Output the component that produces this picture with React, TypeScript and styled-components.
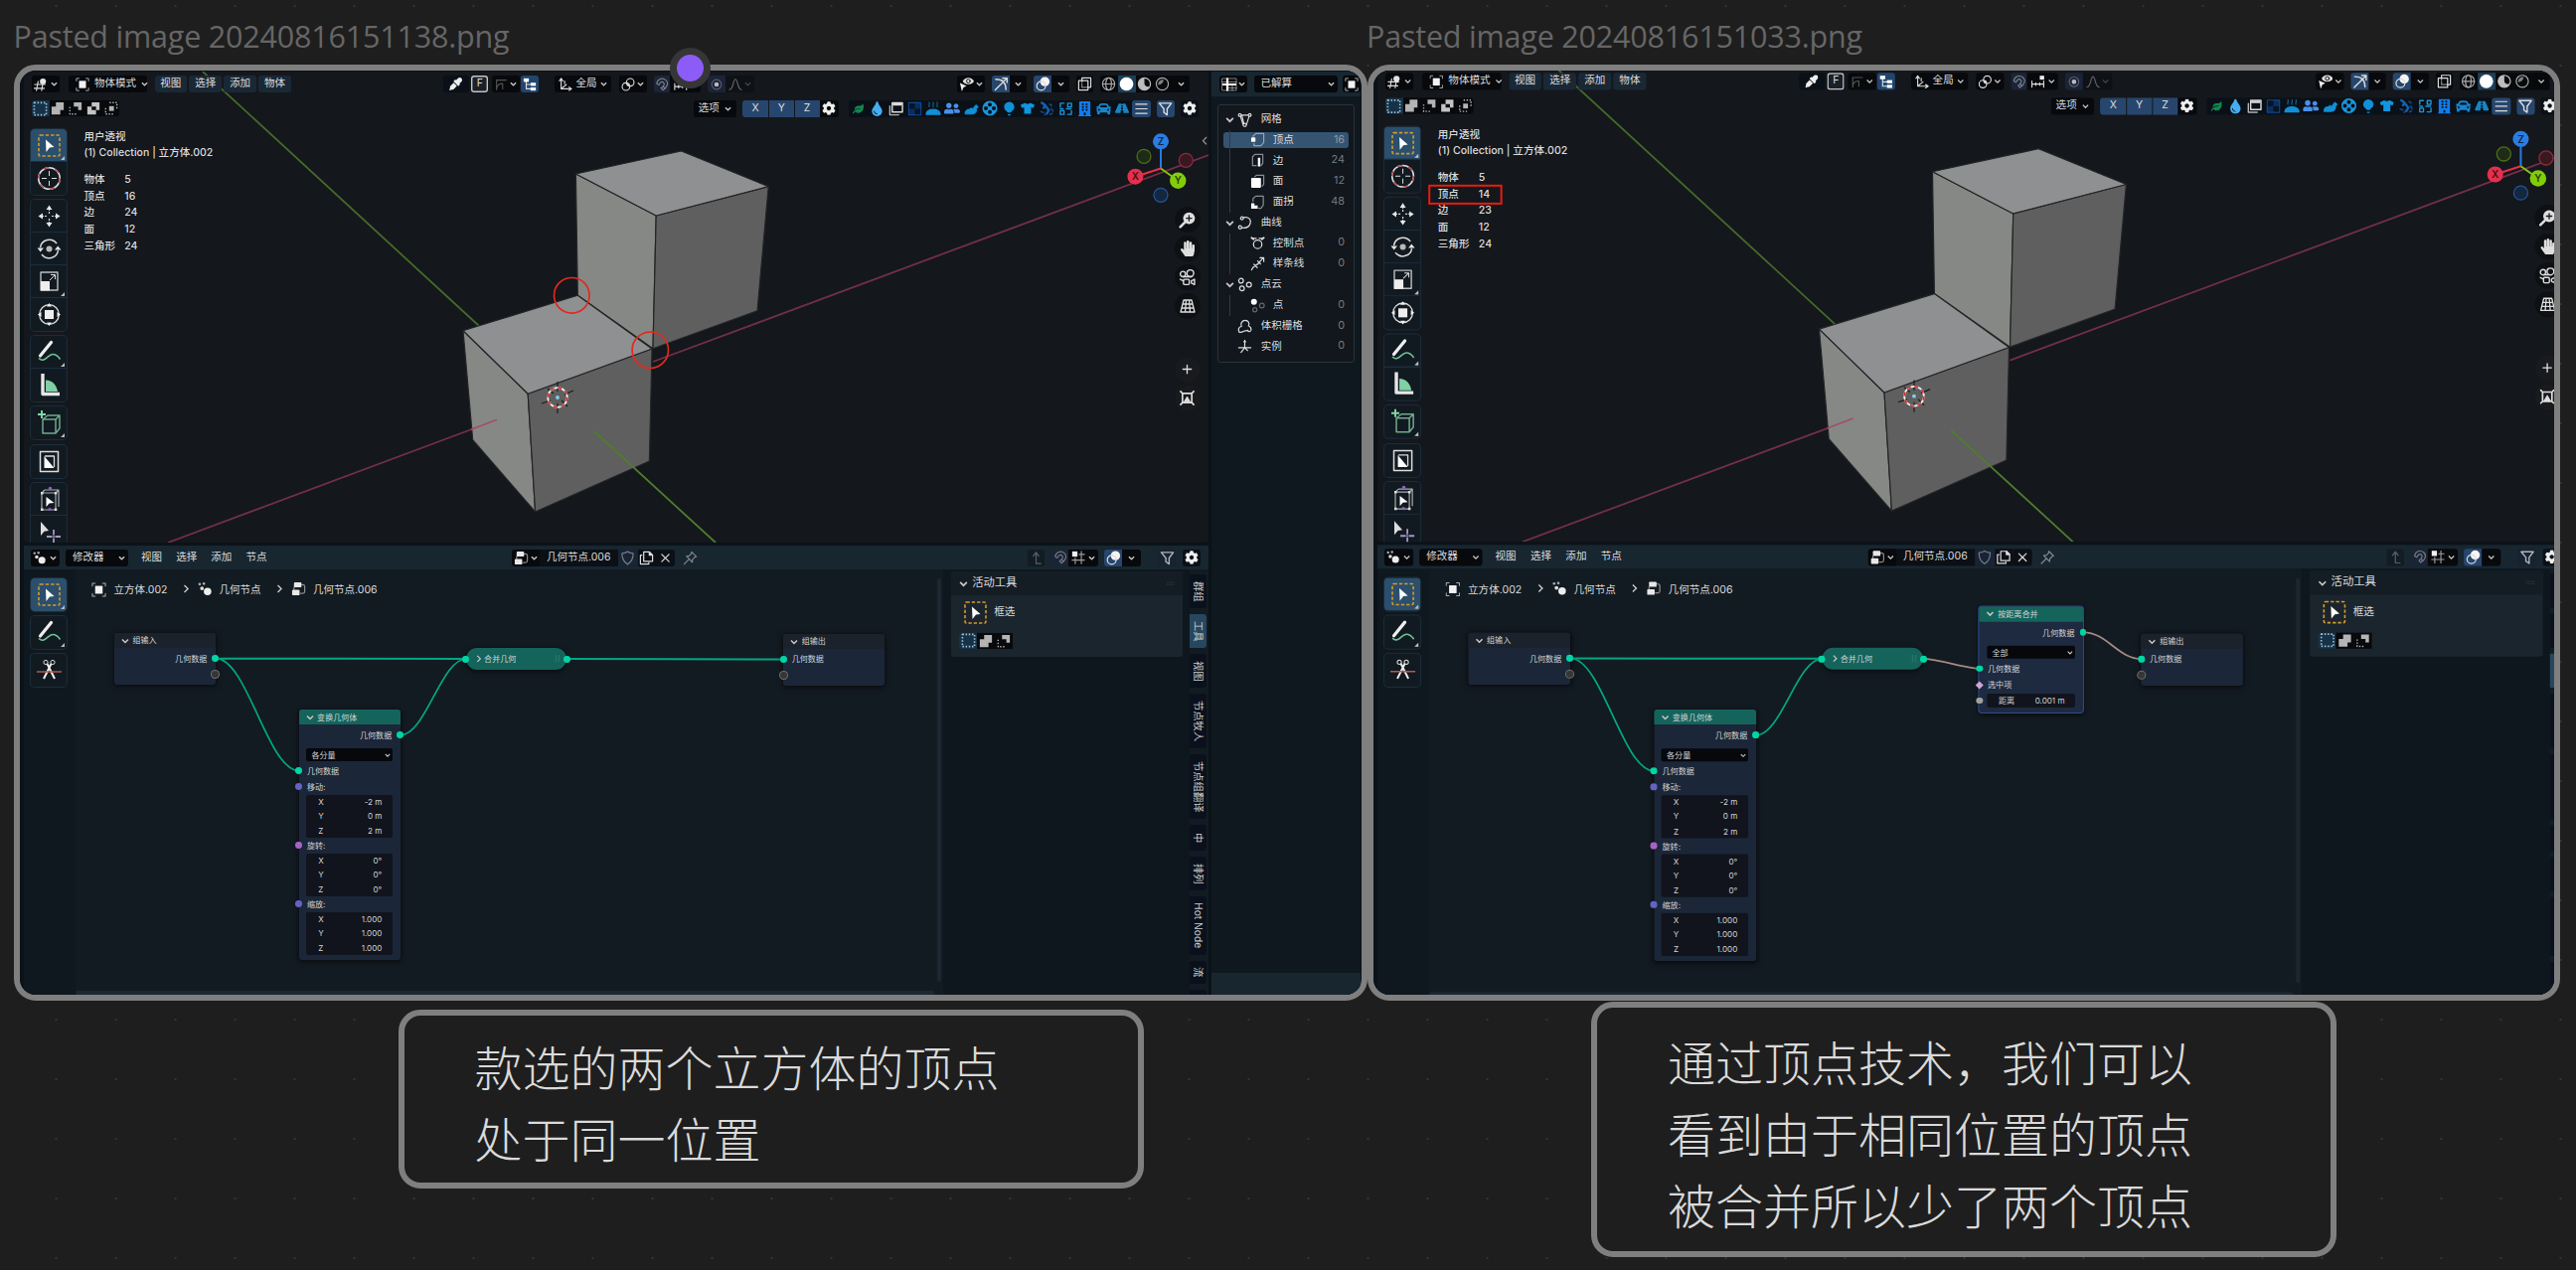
import React from 'react';
import styled, { createGlobalStyle, css } from 'styled-components';
import {
  FaLeaf, FaTint, FaTshirt, FaBuilding, FaCar, FaRoad, FaCog, FaHandPaper, FaEyeDropper, FaUserFriends,
} from 'react-icons/fa';

const Global = createGlobalStyle`
  html, body { margin: 0; background: #1e1e1e; }
  * { box-sizing: border-box; }
`;

/* ---------- canvas board ---------- */

const Board = styled.main`
  position: relative;
  width: 2592px;
  height: 1278px;
  overflow: hidden;
  background-color: #1e1e1e;
  background-image: radial-gradient(circle, #343434 1.1px, transparent 1.6px);
  background-size: 60px 60px;
  background-position: 26.5px -24px;
  font-family: Inter, 'Noto Sans CJK SC', sans-serif;
`;

const BoardItem = styled.section<{ $x: number; $y: number; $w: number; $h: number }>`
  position: absolute;
  left: ${p => p.$x}px;
  top: ${p => p.$y}px;
  width: ${p => p.$w}px;
  height: ${p => p.$h}px;
  border: 6px solid #7f7f7f;
  border-radius: 22px;
  background: #1e1e1e;
`;

const ImageCard = styled(BoardItem)`
  overflow: hidden;
  background: #0c141b;
`;

const NoteCard = styled(BoardItem)<{ $pt: number }>`
  padding: ${p => p.$pt}px 71px;
  color: #dadada;
  font-family: 'Noto Sans CJK SC', sans-serif;
  font-weight: 300;
  font-size: 48px;
  line-height: 72px;
  white-space: nowrap;
`;

const FileName = styled.h2<{ $x: number }>`
  position: absolute;
  left: ${p => p.$x}px;
  top: 13px;
  margin: 0;
  color: #666;
  font: 400 30.5px/46px 'Open Sans', 'Noto Sans', sans-serif;
  letter-spacing: -0.2px;
  white-space: nowrap;
`;

const Handle = styled.i`
  position: absolute;
  left: 674px;
  top: 48px;
  width: 41px;
  height: 41px;
  border: 7px solid #363636;
  border-radius: 50%;
  background: #8b5cf6;
`;

/* ---------- editor frame ---------- */

const Screen = styled.div<{ $sx: number; $sy: number; $dx: number; $dy: number; $w: number }>`
  display: flex;
  gap: 3px;
  width: ${p => p.$w}px;
  height: 931px;
  padding: 1px 0 0 4px;
  background: #0b1218;
  transform-origin: 0 0;
  transform: translate(${p => p.$dx}px, ${p => p.$dy}px) scale(${p => p.$sx}, ${p => p.$sy});
  color: #dcdcdc;
  font-size: 10.5px;
  line-height: 1;
  white-space: nowrap;
`;

const MainColumn = styled.div`
  display: flex;
  flex-direction: column;
  width: 1192px;
  flex: none;
`;

const Viewport = styled.div`
  position: relative;
  height: 474px;
  flex: none;
  overflow: hidden;
  border-radius: 4px;
  background: #14171c;
`;

const Scene = styled.svg`
  position: absolute;
  inset: 0;
`;

const Bar = styled.div<{ $h: number; $pl?: number; $bg?: string }>`
  position: relative;
  display: flex;
  align-items: center;
  flex: none;
  height: ${p => p.$h}px;
  padding-left: ${p => p.$pl ?? 0}px;
  background: ${p => p.$bg ?? 'transparent'};
`;

const Cell = styled.span<{ $w: number; $ml?: number; $bg?: string; $r?: string; $line?: string; $h?: number; $c?: string }>`
  display: flex;
  align-items: center;
  justify-content: space-evenly;
  flex: none;
  width: ${p => p.$w}px;
  height: ${p => p.$h ?? 17}px;
  margin-left: ${p => p.$ml ?? 0}px;
  border-radius: ${p => p.$r ?? '3px'};
  background: ${p => p.$bg ?? '#07090c'};
  color: ${p => p.$c ?? '#dcdcdc'};
  ${p => p.$line && css`box-shadow: inset 0 0 0 1.4px ${p.$line};`}
  svg { flex: none; }
`;

const Select = styled(Cell)`
  justify-content: flex-start;
  padding: 0 3px 0 7px;
  gap: 5px;
  svg:last-child { margin-left: auto; }
`;

const Text = styled.span<{ $ml?: number; $c?: string; $s?: number }>`
  margin-left: ${p => p.$ml ?? 0}px;
  color: ${p => p.$c ?? 'inherit'};
  ${p => p.$s && css`font-size: ${p.$s}px;`}
`;

const OverlayRow = styled.div`
  position: relative;
  display: flex;
  height: 425px;
`;

const ToolStack = styled.div`
  display: flex;
  flex-direction: column;
  gap: 5.3px;
  width: 36.8px;
  margin-left: 6.7px;
  padding-top: 8.5px;
  flex: none;
`;

const ToolGroup = styled.div`
  display: flex;
  flex-direction: column;
  border-radius: 4px;
  box-shadow: 0 0 0 1px #1b2d3b;
  overflow: hidden;
  background: #121a21;
  flex: none;
`;

const Tool = styled.div<{ $on?: boolean; $more?: boolean }>`
  position: relative;
  display: grid;
  place-items: center;
  height: 33px;
  background: ${p => (p.$on ? '#2b4f6c' : 'transparent')};
  & + & { box-shadow: 0 -1px 0 #1b2d3b; }
  ${p => p.$more && css`
    &::after {
      content: '';
      position: absolute;
      right: 2px;
      bottom: 2px;
      border: 2px solid transparent;
      border-right-color: #b8b8b8;
      border-bottom-color: #b8b8b8;
    }
  `}
`;

const Stats = styled.div`
  margin: 8.7px auto 0 17px;
  font-weight: 500;
  letter-spacing: 0.03px;
  line-height: 16.67px;
`;

const StatRow = styled.div<{ $first?: boolean }>`
  position: relative;
  display: flex;
  margin-top: ${p => (p.$first ? 10 : 0)}px;
  span:first-child { width: 40.8px; }
`;

const RedBox = styled.i`
  position: absolute;
  left: -9px;
  top: -1.8px;
  width: 73.5px;
  height: 19.6px;
  border: 2px solid #e81c12;
`;

const NavColumn = styled.div`
  display: flex;
  flex-direction: column;
  gap: 2.9px;
  padding: 87.4px 8.4px 0 0;
`;

const NavButton = styled.span<{ $mt?: number; $bg?: string }>`
  display: grid;
  place-items: center;
  width: 26px;
  height: 26px;
  margin-top: ${p => p.$mt ?? 0}px;
  border-radius: 50%;
  background: ${p => p.$bg ?? '#0e1014'};
  color: #dedede;
`;

/* ---------- node editor ---------- */

const NodeBody = styled.div`
  display: flex;
  height: 428px;
`;

const NodeTools = styled.div`
  width: 51.6px;
  flex: none;
  background: #0f181f;
`;

const NodeCanvas = styled.div`
  position: relative;
  width: 873.7px;
  flex: none;
  background: #131b22;
`;

const Crumbs = styled.div`
  display: flex;
  align-items: center;
  height: 41.5px;
  padding-left: 16px;
`;

const Links = styled.svg`
  position: absolute;
  inset: 0;
`;

const ScrollV = styled.i`
  position: absolute;
  left: 867px;
  top: 9px;
  width: 4px;
  height: 406px;
  border-radius: 2px;
  background: #1b2731;
`;

const ScrollH = styled.i`
  position: absolute;
  left: 0;
  bottom: 0;
  width: 864px;
  height: 4px;
  border-radius: 2px;
  background: #1b2731;
`;

const NodeBox = styled.div<{ $x: number; $y: number; $w: number; $h: number; $sel?: boolean }>`
  position: absolute;
  left: ${p => p.$x}px;
  top: ${p => p.$y}px;
  width: ${p => p.$w}px;
  height: ${p => p.$h}px;
  border-radius: 3px;
  background: ${p => (p.$sel ? '#1d2a40' : '#1b2738')};
  box-shadow: ${p => (p.$sel ? '0 0 0 1px #2f4d8c, ' : '')}0 1px 5px 1px rgba(0, 0, 0, 0.55);
  font-size: 8.05px;
  color: #d2d4d6;
`;

const NodeHead = styled.div<{ $bg: string }>`
  display: flex;
  align-items: center;
  gap: 3.5px;
  height: 15px;
  padding-left: 7px;
  border-radius: 3px 3px 0 0;
  background: ${p => p.$bg};
`;

const Pill = styled(NodeBox)`
  display: flex;
  align-items: center;
  gap: 2.5px;
  padding: 0 6px 0 10px;
  border-radius: 11px;
  background: #14645c;
  i { margin-left: auto; color: #4d8f88; font-style: normal; font-size: 6px; letter-spacing: 1px; }
`;

const NodeRow = styled.div<{ $out?: boolean; $mt?: number; $h?: number }>`
  position: relative;
  display: flex;
  align-items: center;
  justify-content: ${p => (p.$out ? 'flex-end' : 'flex-start')};
  height: ${p => p.$h ?? 16}px;
  margin-top: ${p => p.$mt ?? 0}px;
  padding: 0 8.4px;
`;

const Socket = styled.i<{ $c: string; $out?: boolean; $hollow?: boolean; $diamond?: boolean }>`
  position: absolute;
  ${p => (p.$out ? 'right' : 'left')}: -3.4px;
  top: calc(50% - 3.4px);
  width: 6.8px;
  height: 6.8px;
  border-radius: 50%;
  background: ${p => p.$c};
  ${p => p.$hollow && css`background: #363636; box-shadow: 0 0 0 1px #6e6e6e;`}
  ${p => p.$diamond && css`border-radius: 0; transform: rotate(45deg) scale(0.8);`}
`;

const NodeSelect = styled.div<{ $mt: number }>`
  display: flex;
  align-items: center;
  justify-content: space-between;
  height: 12.8px;
  margin: ${p => p.$mt}px 8px 1.7px 7.8px;
  padding: 0 2px 0 5px;
  border-radius: 2px;
  background: #06080c;
`;

const Fields = styled.div<{ $h: number }>`
  display: flex;
  flex-direction: column;
  height: ${p => p.$h}px;
  margin: 0 7.8px;
  border-radius: 2px;
  background: #11141d;
`;

const Field = styled.div`
  display: flex;
  flex: 1;
  align-items: center;
  justify-content: space-between;
  padding: 0 10.5px 0 11.5px;
  span:first-child { min-width: 6px; text-align: center; }
`;

/* ---------- sidebar ---------- */

const Sidebar = styled.div`
  display: flex;
  flex: 1;
  background: #0f171e;
`;

const ToolPanel = styled.div`
  width: 233.3px;
  height: 86px;
  margin: 2px 7px 0 7.4px;
  flex: none;
  border-radius: 3px;
  overflow: hidden;
  background: #1b252e;
`;

const Tabs = styled.div`
  display: flex;
  flex-direction: column;
  gap: 6px;
  width: 18.6px;
  padding-top: 5.3px;
  background: #121b22;
  overflow: hidden;
`;

const Tab = styled.div<{ $h: number; $on?: boolean }>`
  display: flex;
  align-items: center;
  justify-content: center;
  flex: none;
  width: 17px;
  height: ${p => p.$h}px;
  border-radius: 0 3px 3px 0;
  background: ${p => (p.$on ? '#26475f' : '#0b111c')};
  writing-mode: vertical-rl;
  text-orientation: sideways;
  font-size: 10.3px;
  color: #cfcfcf;
`;

/* ---------- spreadsheet ---------- */

const Spreadsheet = styled.div`
  display: flex;
  flex-direction: column;
  width: 150px;
  flex: none;
  background: #0f181f;
`;

const Tree = styled.div`
  display: flex;
  flex-direction: column;
  height: 260px;
  margin: 7.5px 6px auto;
  padding: 4.3px 5px;
  border: 1px solid #2b333a;
  border-radius: 3px;
  background: #12161d;
`;

const TreeRow = styled.div<{ $on?: boolean; $child?: boolean }>`
  position: relative;
  display: flex;
  align-items: center;
  height: 16.8px;
  margin: 2.05px 0;
  padding: 0 4px 0 ${p => (p.$child ? 27 : 0)}px;
  border-radius: 3px;
  background: ${p => (p.$on ? '#345472' : 'transparent')};
  span { margin-left: 7.8px; }
  b { margin-left: auto; font-weight: 400; color: ${p => (p.$on ? '#8d97a0' : '#777b80')}; font-size: 10.8px; }
  ${p => p.$child && css`
    &::before { content: ''; position: absolute; left: 6px; top: -2px; bottom: -2px; width: 1px; background: #333b43; }
  `}
`;

const Slot = styled.i<{ $w: number }>`
  display: grid;
  place-items: center;
  flex: none;
  width: ${p => p.$w}px;
`;

const SheetFooter = styled.div`
  height: 22.7px;
  background: #182630;
`;

/* ---------- icons ---------- */

const Svg = ({ s = 14, children, c = 'currentColor', w = 1.3 }: { s?: number; children: React.ReactNode; c?: string; w?: number }) => (
  <svg width={s} height={s} viewBox="0 0 16 16" fill="none" stroke={c} strokeWidth={w} strokeLinecap="round" strokeLinejoin="round">
    {children}
  </svg>
);

const Chev = ({ c = '#c8c8c8', s = 7 }: { c?: string; s?: number }) => (
  <svg width={s} height={s} viewBox="0 0 8 8" fill="none" stroke={c} strokeWidth="1.5"><path d="M1 2.5l3 3 3-3" /></svg>
);
const ChevRight = ({ s = 7 }: { s?: number }) => (
  <svg width={s} height={s * 1.3} viewBox="0 0 7 9" fill="none" stroke="#cfcfcf" strokeWidth="1.3"><path d="M1.5 1l3.6 3.5L1.5 8" /></svg>
);

const icons = {
  view3d: <><path d="M1 8h12M0 12.5h12M5 4.5L3 15M10 9l-1 6" /><circle cx="10.5" cy="4.5" r="3.5" fill="#e4e4e4" stroke="none" /></>,
  object: <><path d="M1 4V1h3M12 1h3v3M15 12v3h-3M4 15H1v-3" strokeWidth="1.1" opacity=".75" /><rect x="4" y="3.8" width="8" height="8.4" fill="#f2f2f2" stroke="none" /></>,
  snapCurve: <path d="M3 14V3h11M3 14c0-6 4-7 7-7M10 7v6" opacity=".35" />,
  outliner: <><path d="M4 4v9h5M4 8h5" /><rect x="1" y="1" width="6" height="4" fill="#fff" stroke="none" /><rect x="9" y="6" width="6" height="3.6" fill="#fff" stroke="none" /><rect x="9" y="11.4" width="6" height="3.6" fill="#fff" stroke="none" /></>,
  axes: <path d="M3 2v11h11M3 13l6-5M1 4l2-3 2 3M12 11l3 2-3 2M7 4v3" />,
  link: <><circle cx="5.5" cy="10.5" r="4.3" /><circle cx="10.5" cy="5.5" r="4.3" /><circle cx="8" cy="8" r="1.2" fill="currentColor" /></>,
  magnet: <path d="M2 7C3 1 9 0 12.500 3s2 8-3.500 11.500L7 12c3-1.800 4.500-4 3-6S6 5 4.500 8.500zM9.500 10.500l2 2.300M2 7l2.500 1.500" />,
  increment: <><path d="M1 7v7M5.5 9v3M10 9v3M14.5 7v7M1 10.5h13.5" /><rect x="10" y="1" width="5" height="4.5" fill="#eee" stroke="none" /></>,
  prop: <><circle cx="8" cy="8" r="5.5" opacity=".4" /><circle cx="8" cy="8" r="2" fill="currentColor" /></>,
  falloff: <path d="M1 14C6 14 5 2 8 2s2 12 7 12" opacity=".6" />,
  eyeCursor: <><path d="M4 5c2-5 10-5 12 0-2 4.500-10 4.500-12 0z" fill="#ddd" stroke="none" /><circle cx="10" cy="4.900" r="2" fill="#ddd" stroke="#111" strokeWidth="1" /><path d="M1 7l7 3-3.200 1.600L3 16z" fill="#eee" stroke="none" /></>,
  gizmo: <path d="M2 3c7 0 11 4 11 11M1.500 14.500L14 2M9.500 1.800H14.200V6.500" strokeWidth="1.5" />,
  overlay: <><circle cx="10" cy="5.5" r="5" fill="#f5f5f5" stroke="none" /><circle cx="6" cy="10" r="4.7" /></>,
  xray: <><rect x="1.5" y="4.5" width="10" height="10" /><path d="M5 4.5V1.500h9.500v10h-3" /><path d="M5 8v3.500h3.500M5 4.500v2M9 11.500h2" opacity=".6" /></>,
  wire: <><circle cx="8" cy="8" r="6.5" /><ellipse cx="8" cy="8" rx="3" ry="6.5" /><path d="M1.5 8h13" /></>,
  solid: <circle cx="8" cy="8" r="7.3" fill="#fff" stroke="none" />,
  material: <><circle cx="8" cy="8" r="6.5" /><path d="M8 1.500a6.500 6.500 0 0 0 0 13c3 0 5-1.500 6-4-3 1-6-.5-6-3z" fill="currentColor" stroke="none" /></>,
  rendered: <><circle cx="8" cy="8" r="6.500" /><path d="M3.500 9C3.500 5 6 3.300 9.500 3.500 9 7 7 9 3.500 9z" fill="currentColor" stroke="none" opacity=".75" /></>,
  filter: <path d="M1.5 2h13L10 8v6.500L6.500 12V8z" strokeWidth="1.5" />,
  sheet: <><path d="M1 2h14v12H1zM1 5.500h14M11 8v6M6 11.500h9" strokeWidth="1" opacity=".55" /><path d="M6 1.500v13M1 8h14" stroke="#fff" strokeWidth="2.200" strokeLinecap="butt" /></>,
  layers: <><path d="M1.5 5v9.500H11" strokeWidth="1.500" opacity=".8" /><rect x="4" y="1.500" width="11" height="10" strokeWidth="1.500" /><path d="M4.500 3.200h10" strokeWidth="2.600" strokeLinecap="butt" /></>,
  checker: <><rect x="1.5" y="1.5" width="13" height="13" fill="#0c2c5c" /><path d="M2 2h6v6H2zM8 8h6v6H8z" fill="#071424" stroke="none" /></>,
  steam: <><path d="M1 14c0-6.500 14-6.500 14 0z" fill="currentColor" /><path d="M4 6.500c-1-2 1-2 0-4.500M8 6.500c-1-2 1-2 0-4.500M12 6.500c-1-2 1-2 0-4.500" strokeWidth="1" opacity=".8" /></>,
  fish: <path d="M1 13.500c-.5-3 2-5.500 4.500-5 .8-1.500 3-1.800 4-.5L11 5.500l2-2 2.500 2.500-2 2c.8 3-1 5.800-5 5.800z" fill="currentColor" strokeWidth=".6" />,
  reel: <path fillRule="evenodd" fill="currentColor" stroke="none" d="M8 .5a7.500 7.500 0 1 1 0 15 7.500 7.500 0 0 1 0-15zM8 2.300a2 2 0 1 0 0 4 2 2 0 0 0 0-4zM8 9.700a2 2 0 1 0 0 4 2 2 0 0 0 0-4zM4 6a2 2 0 1 0 0 4 2 2 0 0 0 0-4zM12 6a2 2 0 1 0 0 4 2 2 0 0 0 0-4z" />,
  balloon: <><path d="M8 .5a5.500 5.500 0 0 1 5.500 5.500c0 3-3 4.500-4 6h-3c-1-1.500-4-3-4-6A5.500 5.500 0 0 1 8 .5z" fill="currentColor" stroke="none" /><path d="M7 14.500h2" /></>,
  pieces: <><path d="M2.500 1.500l3.500 2.500-1.500 3M7 5.500l3 4-2 3.500" strokeWidth="2.600" /><path d="M1.500 11l3 1M5.500 14.500l1.500-1M11 3l2 1.500M12.500 8l2 2.500M11.500 14l2-1" strokeWidth="1.800" opacity=".7" /></>,
  swap: <path d="M2 6V2h4M10 2h4v4h-4zM2 10h4v4H2zM14 10v4h-4M8.500 8h5M2 8h3" strokeWidth="1.500" />,
  select: <rect x="1.5" y="1.5" width="13" height="13" strokeDasharray="1.6 1.8" strokeWidth="1.7" strokeLinecap="butt" />,
  union: <path d="M6 1h9v9h-4v5H1V6h5z" fill="currentColor" stroke="none" />,
  subtract: <><path d="M6 1h9v9h-4V6H6z" fill="currentColor" stroke="none" /><path d="M1.5 6.500v8h8" strokeDasharray="1.6 1.800" strokeLinecap="butt" strokeWidth="1.600" /></>,
  xor: <path fillRule="evenodd" d="M6 1h9v9h-4v5H1V6h5zM6 6v4h5V6z" fill="currentColor" stroke="none" />,
  intersect: <><rect x="5.5" y="5.5" width="5.5" height="5.5" fill="currentColor" stroke="none" /><path d="M6 1.500h8.500V10M10 14.500H1.500V6" strokeDasharray="1.6 1.8" strokeLinecap="butt" strokeWidth="1.600" /></>,
  geometry: <><circle cx="10.5" cy="11" r="4" fill="#eee" stroke="none" /><circle cx="4.500" cy="7.500" r="2" fill="#ddd" stroke="none" /><circle cx="2" cy="3" r="1.400" fill="#aaa" stroke="none" /><circle cx="6.500" cy="2.500" r="1.400" fill="#aaa" stroke="none" /></>,
  nodetree: <><rect x="3" y="1" width="8" height="5.500" rx="1" fill="#e8e8e8" stroke="none" /><rect x="1" y="9" width="8" height="6" rx="1" fill="#e8e8e8" stroke="none" /><path d="M11 3.500h1.500a2 2 0 0 1 2 2V11a2 2 0 0 1-2 2H10M3 6.500V9" opacity=".6" /></>,
  shield: <path d="M8 1.200c2 1.300 4 1.800 6 1.800 0 6-2 9.500-6 11.800C4 12.500 2 9 2 3c2 0 4-.5 6-1.800z" />,
  copy: <><path d="M5 1.500h6l3.500 3.500v6.500H5z" /><path d="M11 1.500V5h3.500z" fill="#eee" /><path d="M3 5H1.500v9.500h9V13" /></>,
  close: <path d="M3.500 3.500l9 9M12.500 3.500l-9 9" strokeWidth="1.500" />,
  pin: <path d="M9.500 1.500l5 5-1.500.6-2.500 2.400-.3 3L4 6l3-.3 2.200-2.500zM6.800 9.200L1.500 14.500" />,
  parent: <path d="M5 6l3-4 3 4M8 2.500V14h5" opacity=".35" />,
  grid: <><path d="M9 4.500h6M4.500 8.500v6.500M11.500 1v14M1 11h14" opacity=".7" /><rect x="1" y="1" width="6" height="6" fill="#f0f0f0" stroke="none" /></>,
  zoom: <><circle cx="9.800" cy="6.200" r="5.600" fill="#dedede" stroke="none" /><path d="M5.500 10.500l-4 4" strokeWidth="2.400" /><path d="M9.800 3.700v5M7.300 6.200h5" stroke="#15181c" strokeWidth="1.200" /></>,
  camera: <><circle cx="4" cy="4.500" r="2.500" /><circle cx="11" cy="3.800" r="3.200" /><path d="M4 7h8" /><rect x="4.500" y="9.500" width="5.500" height="5" rx="1" /><path d="M12 11l3-1.500v5L12 13zM1.500 9.500l3 1.500" /></>,
  persp: <path d="M4 2h8l3 12H1zM6.500 2L5.500 14M9.500 2l1 12M3 6h10M2 10h12" />,
  plus: <path d="M8 3.500v9M3.500 8h9" strokeWidth="1.4" />,
  frame: <><path d="M3 3h10v10H3zM1 1l2 2M15 1l-2 2M1 15l2-2M15 15l-2-2" strokeWidth="1.800" /><path d="M5 12l3-5 3 5z" fill="currentColor" /></>,
  mesh: <><path d="M3 3h10L10 13H6zM5 4l2 8" strokeWidth="1.200" /><circle cx="2.700" cy="3" r="1.500" fill="#111" /><circle cx="13.300" cy="3" r="1.500" fill="#111" /><circle cx="8" cy="13.500" r="1.700" fill="#111" /></>,
  vert: <><path d="M3 4.500L6 1.500h8.500V11L11.500 14.500H4V12.500" opacity=".6" /><rect x="1" y="5.500" width="4.600" height="5" rx="1" fill="#fff" stroke="none" /></>,
  edge: <><path d="M2.500 13.500V4L5 1.500h8.500V11L11.500 13.500M2.500 13.500h4" opacity=".6" /><path d="M9.500 5v9.500" strokeWidth="2.600" stroke="#fff" strokeLinecap="butt" /></>,
  face: <><path d="M5 3l1.500-1.500h8V11L13 13" opacity=".6" /><rect x="1" y="4.300" width="10.500" height="10.500" rx="1" fill="#fff" stroke="none" /></>,
  corner: <><path d="M3 7V4l3-2.500h8V11l-2.500 3.500H9" opacity=".6" /><path d="M1 9v6h7v-3.500H4.500V9z" fill="#fff" stroke="none" /></>,
  curve: <><path d="M6.500 2C13 1 15 4.500 14 8c-1 4-5 5.500-9 5" /><circle cx="5" cy="2.800" r="1.500" /><circle cx="3" cy="12.500" r="1.700" /></>,
  ctrl: <><circle cx="8" cy="9.500" r="4.500" /><path d="M3 3h3.500M9.500 3H13" /><path d="M1.500 2.500l2 1.500M14.500 2.500l-2 1.500" strokeWidth="2" /></>,
  spline: <path d="M1.500 14.500c1-2.500 2-3.500 4-4.500S9 8 10 6l4-4.500M10.500 1.500h4v4M4 8.500l3.500 3.500M8 5l3 3" />,
  cloud: <><circle cx="4" cy="3.800" r="2.500" /><circle cx="5" cy="12" r="2.500" /><circle cx="12.500" cy="8" r="2.600" /></>,
  point: <><circle cx="4" cy="4" r="3.200" fill="#fff" stroke="none" /><circle cx="5" cy="12.500" r="2.200" opacity=".4" /><circle cx="12.500" cy="8" r="2.500" opacity=".4" /></>,
  volume: <path d="M2 14c-1.500-3-.5-5.500 2.500-6C3 5 5 1.500 8.500 1.500S13.500 5 12 7.500c2 .5 3.500 3 2.500 5-1 1.500-3 1-3.500-.5-1 1.500-2.500 0-4 1S4 15 2 14z" />,
  instance: <path d="M8 1.500V10M1.500 9.500H14.500M8 9.500L4 14.500M8 9.500l3 3M7 3h2" />,
};
type IconName = keyof typeof icons;
const Icon = ({ n, s, c }: { n: IconName; s?: number; c?: string }) => <Svg s={s} c={c}>{icons[n]}</Svg>;

const tools = {
  box: <><rect x="3" y="3" width="21" height="21" rx="1.500" stroke="#d49a2c" strokeWidth="1.600" strokeDasharray="3.300 2" /><path d="M10 7.500l8.500 7.500-4.500.6L10.500 20z" fill="#fff" stroke="none" /></>,
  cursor: <><circle cx="13.500" cy="13.500" r="10.800" stroke="#dcdcdc" strokeWidth="1.500" /><circle cx="13.500" cy="13.500" r="10.800" stroke="#b3474a" strokeWidth="1.500" strokeDasharray="5 6.300" /><path d="M13.500 6v5M13.500 16v5M6 13.500h5M16 13.500h5" strokeWidth="1" /></>,
  move: <><path d="M13.500 6v5M13.500 16v5M6 13.500h5M16 13.500h5" strokeWidth="1.200" strokeDasharray="2 1" /><path d="M10.500 7l3-4.500 3 4.500zM10.500 20l3 4.500 3-4.500zM7 10.500L2.500 13.500 7 16.500zM20 10.500l4.500 3-4.500 3z" fill="#e6e6e6" stroke="none" /></>,
  rotate: <><path d="M4.500 12a9.200 9.200 0 0 1 16.500-4M22.500 15a9.200 9.200 0 0 1-16.500 4" strokeWidth="1.500" /><circle cx="13.500" cy="13.500" r="3" fill="#b9b9b9" stroke="none" /><path d="M1.500 12.500h6.500l-3.300 4zM19 14.500h6.500l-3.300-4z" fill="#e6e6e6" stroke="none" /></>,
  scale: <><rect x="5" y="4" width="17" height="18" strokeWidth="1.400" opacity=".85" /><rect x="5" y="13" width="9" height="9.500" fill="#eee" stroke="none" /><path d="M14 12l5-5M15 6.500h4.500V11" /></>,
  transform: <><circle cx="13.500" cy="13.500" r="9.800" strokeWidth="1.300" /><rect x="9" y="9" width="9" height="9" fill="#eee" stroke="none" /><path d="M11 5.500l2.500-3.500L16 5.500zM11 21.500l2.500 3.500 2.500-3.500zM5.500 11L2 13.500 5.500 16zM21.500 11l3.500 2.500-3.500 2.500z" fill="#eee" stroke="none" /></>,
  annotate: <><path d="M15.500 3.500L4.500 17" stroke="#eee" strokeWidth="3.200" strokeLinecap="round" /><path d="M3 19.500c6 5.500 9-4 14-4 4 0 5.500 2 7.500 5" stroke="#6fbf97" strokeWidth="1.600" /></>,
  measure: <><path d="M7 2v20.500h17" stroke="#e6e6e6" strokeWidth="3.400" /><path d="M10 8.500c7 0 11 5.500 12 11.500H10z" fill="#7fd0a3" stroke="none" /></>,
  addCube: <><path d="M7 10h13v14H7zM7 10l5-4h12v13l-4 5M20 10l4-4" stroke="#6fa98c" strokeWidth="1.500" /><path d="M6 1v8M2 5h8" stroke="#86d6ab" strokeWidth="1.900" /></>,
  inset: <><rect x="4.500" y="3.500" width="18" height="20" strokeWidth="1.500" /><path d="M8.500 8v12h10z" fill="#fff" stroke="none" /><path d="M9 8h9.500v11" strokeWidth="1.300" /></>,
  cage: <><path d="M6 7h14v17H6zM9 4h14v17M6 7l3-3M20 7l3-3" strokeWidth="1.200" opacity=".75" /><path d="M10.500 11l8 6-5 .6-3 3.500z" fill="#fff" stroke="none" /><path d="M5 6h2.500v2.500H5zM18.800 6h2.500v2.500h-2.500zM5 22.500h2.500V25H5zM18.800 22.500h2.500V25h-2.500z" fill="#ddd" stroke="none" /><circle cx="14.500" cy="2.500" r="1.700" fill="#8e63bd" stroke="none" /><circle cx="14" cy="23.500" r="1.600" fill="#8e63bd" stroke="none" /></>,
  cageMove: <><path d="M5 3l8 9-4.500.8L5 17z" fill="#ddd" stroke="none" /><path d="M18 11v14M11 18h14" stroke="#a397c0" strokeWidth="1.800" strokeDasharray="5.500 1 1 1 5.500 3" /></>,
  cut: <><path d="M8 22l7.500-15M19 22L11.500 7" stroke="#eee" strokeWidth="2" /><circle cx="10" cy="5.500" r="2.100" /><circle cx="17" cy="5.500" r="2.100" /><path d="M1 15h25" stroke="#b4584f" strokeWidth="1.500" /></>,
};
const ToolIcon = ({ n }: { n: keyof typeof tools }) => (
  <svg width="27" height="27" viewBox="0 0 27 27" fill="none" stroke="#dcdcdc" strokeLinejoin="round">{tools[n]}</svg>
);

/* ---------- viewport ---------- */

const BLUE = '#27466d';
const DARK = '#0a1017';
const MENU = '#1a2836';

const SceneArt = ({ marks }: { marks: boolean }) => (
  <Scene width="1192" height="474" viewBox="24 72 1192 474" fill="none">
    <path d="M204 72L482 328" stroke="#46692a" strokeWidth="1.8" />
    <path d="M657 364L1216 156" stroke="#722f48" strokeWidth="1.8" />
    <path d="M169 546L480 430" stroke="#722f48" strokeWidth="1.8" />
    <g stroke="#242526" strokeWidth="1.2" strokeLinejoin="round">
      <path d="M579.4 175L660.2 217 657 350.7 581.3 297.3z" fill="#868886" />
      <path d="M660.2 217L773.2 187.7 762 312.7 657 350.7z" fill="#5f5f5f" />
      <path d="M579.4 175L685.5 152 773.2 187.7 660.2 217z" fill="#8f9092" />
      <path d="M466 332.7L531.2 396.3 538.6 515 475.7 442.7z" fill="#868886" />
      <path d="M531.2 396.3L656 351 653.4 464 538.6 515z" fill="#5f5f5f" />
      <path d="M466 332.7L581.3 297.3 656 351 531.2 396.3z" fill="#8f9092" />
    </g>
    <path d="M474 432.200L500 422.300" stroke="#a34d69" strokeWidth="1.600" />
    <path d="M597.8 434L720 546" stroke="#4f7d2b" strokeWidth="1.8" />
    <g strokeWidth="1.2">
      <path d="M561 384v10M561 406v10M545 406l9-3M568 397l9-4M551 391l6 5M565 403l6 6" stroke="#1c1c1c" />
      <circle cx="561" cy="400" r="9.800" stroke="#eee" strokeWidth="1.700" />
      <circle cx="561" cy="400" r="9.800" stroke="#cf3232" strokeWidth="1.700" strokeDasharray="4 3.700" />
      <circle cx="561" cy="400" r="1.900" fill="#7fd0ee" />
    </g>
    {marks && (
      <g stroke="#e02a1e" strokeWidth="1.700">
        <circle cx="575.300" cy="297.300" r="17.800" />
        <circle cx="654.300" cy="352.300" r="18.200" />
      </g>
    )}
    <g strokeWidth="2" fontFamily="Inter, sans-serif" fontSize="10" fontWeight="600" textAnchor="middle">
      <circle cx="1151" cy="157.300" r="7" fill="#1f2a17" stroke="#4a7015" strokeWidth="1.300" />
      <circle cx="1193.300" cy="161.300" r="7" fill="#3a1822" stroke="#8e2a3d" strokeWidth="1.300" />
      <circle cx="1168" cy="196.300" r="7" fill="#14273e" stroke="#235596" strokeWidth="1.300" />
      <path d="M1168 169.500V150" stroke="#2a7ae0" />
      <path d="M1168 169.500L1148 176" stroke="#e5304c" />
      <path d="M1168 169.500L1180 178" stroke="#7fc70b" />
      <circle cx="1168" cy="142.300" r="8" fill="#2a7de1" />
      <circle cx="1142.400" cy="177.700" r="8" fill="#e5304c" />
      <circle cx="1185.300" cy="181.700" r="8.200" fill="#82cc0c" />
      <text x="1168" y="145.900" fill="#0d2748">Z</text>
      <text x="1142.400" y="181.300" fill="#4d0e19">X</text>
      <text x="1185.300" y="185.300" fill="#284203">Y</text>
    </g>
    {marks && <path d="M1214 138l-3.500 3.700 3.500 3.700" stroke="#9a9a9a" strokeWidth="1.200" />}
  </Scene>
);

const addOns: [React.ReactNode, string][] = [
  [<FaLeaf size={11} />, '#12874c'],
  [<FaTint size={15} />, '#45aef0'],
  [<Icon n="layers" s={15} />, '#dcdcdc'],
  [<Icon n="checker" s={15} />, '#0d4796'],
  [<Icon n="steam" s={16} />, '#1090d8'],
  [<FaUserFriends size={16} />, '#4a90ea'],
  [<Icon n="fish" s={15} />, '#1090d8'],
  [<Icon n="reel" s={16} />, '#1796dc'],
  [<Icon n="balloon" s={15} />, '#1090d8'],
  [<FaTshirt size={14} />, '#1096e0'],
  [<Icon n="pieces" s={15} />, '#155fae'],
  [<Icon n="swap" s={15} />, '#1b93d6'],
  [<FaBuilding size={15} />, '#0f7df0'],
  [<FaCar size={15} />, '#1585cf'],
  [<FaRoad size={14} />, '#1585c4'],
];

const ViewportHeader = () => (
  <Bar $h={25} $pl={8}>
    <Cell $w={28}><Icon n="view3d" /><Chev /></Cell>
    <Select $w={79} $ml={9}><Icon n="object" s={14} />物体模式<Chev /></Select>
    <Cell $w={32.5} $ml={7.6} $bg={MENU}>视图</Cell>
    <Cell $w={32.5} $ml={2.4} $bg={MENU}>选择</Cell>
    <Cell $w={32.5} $ml={2.4} $bg={MENU}>添加</Cell>
    <Cell $w={32.5} $ml={2.4} $bg={MENU}>物体</Cell>
    <Cell $w={26} $ml={153.2} $bg={DARK}><FaEyeDropper size={13} color="#eee" /></Cell>
    <Cell $w={17} $ml={2.3} $bg="#1b2128" $line="#c4c4c4">F</Cell>
    <Cell $w={28} $ml={3.5}><Icon n="snapCurve" /><Chev /></Cell>
    <Cell $w={18} $ml={1.5} $bg="#22456f"><Icon n="outliner" /></Cell>
    <Cell $w={56.5} $ml={16}><Icon n="axes" />全局<Chev /></Cell>
    <Cell $w={28} $ml={8}><Icon n="link" /><Chev /></Cell>
    <Cell $w={16} $ml={7.5} $bg="#1c2438" $r="3px 0 0 3px" $c="#7d828c"><Icon n="magnet" s={14} /></Cell>
    <Cell $w={31} $r="0 3px 3px 0"><Icon n="increment" s={14} /><Chev /></Cell>
    <Cell $w={18} $ml={7} $bg="#1b2337" $r="3px 0 0 3px" $c="#b9bcc4"><Icon n="prop" s={14} /></Cell>
    <Cell $w={28.5} $bg="#0e1116" $r="0 3px 3px 0" $c="#999"><Icon n="falloff" s={14} /><Chev c="#444" /></Cell>
    <Cell $w={28} $ml={204.5}><Icon n="eyeCursor" s={15} /><Chev /></Cell>
    <Cell $w={17.5} $ml={7} $bg={BLUE} $r="3px 0 0 3px"><Icon n="gizmo" s={15} /></Cell>
    <Cell $w={17.5} $r="0 3px 3px 0"><Chev /></Cell>
    <Cell $w={18} $ml={7} $bg={BLUE} $r="3px 0 0 3px"><Icon n="overlay" s={15} /></Cell>
    <Cell $w={18} $r="0 3px 3px 0"><Chev /></Cell>
    <Cell $w={17} $ml={7}><Icon n="xray" s={15} /></Cell>
    <Cell $w={18} $ml={6.5} $r="3px 0 0 3px" $c="#a8a8a8"><Icon n="wire" s={15} /></Cell>
    <Cell $w={18} $bg="#1e3f57" $r="0"><Icon n="solid" s={15} /></Cell>
    <Cell $w={18} $r="0" $c="#bdbdbd"><Icon n="material" s={15} /></Cell>
    <Cell $w={18} $r="0" $c="#a8a8a8"><Icon n="rendered" s={15} /></Cell>
    <Cell $w={18.5} $r="0 3px 3px 0"><Chev /></Cell>
  </Bar>
);

const SelectModes = ({ all }: { all?: boolean }) => (
  <>
    <Cell $w={18} $h={16} $bg="#173247" $r="3px 0 0 3px" $c="#9cc3de"><Icon n="select" s={15} /></Cell>
    <Cell $w={17.9} $h={16} $r="0" $c="#b4b4b4"><Icon n="union" s={14} /></Cell>
    <Cell $w={17.9} $h={16} $r="0" $c="#b4b4b4"><Icon n="subtract" s={14} /></Cell>
    {all && (
      <>
        <Cell $w={17.9} $h={16} $r="0" $c="#c4c4c4"><Icon n="xor" s={14} /></Cell>
        <Cell $w={17} $h={16} $r="0 3px 3px 0" $c="#b4b4b4"><Icon n="intersect" s={14} /></Cell>
      </>
    )}
  </>
);

const AddOnStrip = styled.div`
  display: flex;
  gap: 0.4px;
  margin-left: 10.5px;
`;

const ToolSettings = () => (
  <Bar $h={24} $pl={7.5}>
    <SelectModes all />
    <Cell $w={42.6} $ml={577.8}>选项<Chev /></Cell>
    <Cell $w={25.8} $ml={6.7} $bg={BLUE} $r="3px 0 0 3px">X</Cell>
    <Cell $w={25} $ml={0.8} $bg={BLUE} $r="0">Y</Cell>
    <Cell $w={25} $ml={0.8} $bg={BLUE} $r="0">Z</Cell>
    <Cell $w={19} $r="0 3px 3px 0"><FaCog size={14} color="#eee" /></Cell>
    <AddOnStrip>
      {addOns.map(([icon, color], i) => <Cell key={i} $w={18.6} $bg={DARK} $c={color} $r="2px">{icon}</Cell>)}
    </AddOnStrip>
    <Cell $w={19} $ml={0.4} $bg={BLUE}><Svg s={15}><path d="M2 3h12M2 8h12M2 13h12" strokeWidth="1.3" /></Svg></Cell>
    <Cell $w={18} $ml={6} $bg={BLUE}><Icon n="filter" s={15} /></Cell>
    <Cell $w={18} $ml={6.5} $bg={DARK}><FaCog size={14} color="#eee" /></Cell>
  </Bar>
);

type StatList = [string, string, boolean?][];

const ViewportPane = ({ stats, marks }: { stats: StatList; marks: boolean }) => (
  <Viewport>
    <SceneArt marks={marks} />
    <ViewportHeader />
    <ToolSettings />
    <OverlayRow>
      <ToolStack>
        <ToolGroup><Tool $on $more><ToolIcon n="box" /></Tool><Tool><ToolIcon n="cursor" /></Tool></ToolGroup>
        <ToolGroup>
          <Tool><ToolIcon n="move" /></Tool><Tool><ToolIcon n="rotate" /></Tool>
          <Tool $more><ToolIcon n="scale" /></Tool><Tool><ToolIcon n="transform" /></Tool>
        </ToolGroup>
        <ToolGroup><Tool $more><ToolIcon n="annotate" /></Tool><Tool><ToolIcon n="measure" /></Tool></ToolGroup>
        <ToolGroup><Tool $more><ToolIcon n="addCube" /></Tool></ToolGroup>
        <ToolGroup><Tool><ToolIcon n="inset" /></Tool></ToolGroup>
        <ToolGroup><Tool><ToolIcon n="cage" /></Tool><Tool><ToolIcon n="cageMove" /></Tool></ToolGroup>
      </ToolStack>
      <Stats>
        <div>用户透视</div>
        <div>(1) Collection | 立方体.002</div>
        {stats.map(([label, value, boxed], i) => (
          <StatRow key={label} $first={i === 0}>
            <span>{label}</span><span>{value}</span>
            {boxed && <RedBox />}
          </StatRow>
        ))}
      </Stats>
      <NavColumn>
        <NavButton><Icon n="zoom" s={17} /></NavButton>
        <NavButton><FaHandPaper size={16} /></NavButton>
        <NavButton><Icon n="camera" s={17} /></NavButton>
        <NavButton><Icon n="persp" s={16} /></NavButton>
        <NavButton $mt={35} $bg="#191a1d"><Icon n="plus" s={15} /></NavButton>
        <NavButton $bg="#191a1d"><Icon n="frame" s={15} /></NavButton>
      </NavColumn>
    </OverlayRow>
  </Viewport>
);

/* ---------- node editor parts ---------- */

const GREEN = '#00d6a3';
const SLATE = '#1c222b';
const TEAL = '#14645c';

const NodeHeader = () => (
  <Bar $h={24} $pl={6.7} $bg="#182630">
    <Cell $w={29.3}><Icon n="geometry" /><Chev /></Cell>
    <Select $w={63.3} $ml={6}>修改器<Chev /></Select>
    <Text $ml={12.7}>视图</Text>
    <Text $ml={14.2}>选择</Text>
    <Text $ml={14.2}>添加</Text>
    <Text $ml={14.2}>节点</Text>
    <Cell $w={28.3} $ml={246} $r="3px 0 0 3px"><Icon n="nodetree" s={15} /><Chev /></Cell>
    <Cell $w={78.7} $bg="#0b1016" $r="0">几何节点.006</Cell>
    <Cell $w={20} $bg="#182333" $r="0" $c="#747c88"><Icon n="shield" s={15} /></Cell>
    <Cell $w={18.7} $bg="#0b1016" $r="0"><Icon n="copy" s={15} /></Cell>
    <Cell $w={18.3} $bg="#0b1016" $r="0 3px 3px 0"><Icon n="close" s={13} /></Cell>
    <Cell $w={18} $ml={6.5} $bg="transparent" $c="#7d868e"><Icon n="pin" s={15} /></Cell>
    <Cell $w={17} $ml={330.8} $bg="#121c24"><Icon n="parent" s={15} /></Cell>
    <Cell $w={16.5} $ml={7.5} $bg="#1a2435" $c="#747c88" $r="3px 0 0 3px"><Icon n="magnet" s={14} /></Cell>
    <Cell $w={30.5} $r="0 3px 3px 0"><Icon n="grid" s={14} /><Chev /></Cell>
    <Cell $w={18} $ml={6} $bg={BLUE} $r="3px 0 0 3px"><Icon n="overlay" s={15} /></Cell>
    <Cell $w={19} $r="0 3px 3px 0"><Chev /></Cell>
    <Cell $w={18} $ml={17} $bg="#172232" $c="#b0b4b8"><Icon n="filter" s={15} /></Cell>
    <Cell $w={17.5} $ml={7} $bg={DARK}><FaCog size={14} color="#eee" /></Cell>
  </Bar>
);

const Vector = ({ name, color, values }: { name: string; color: string; values: string[] }) => (
  <>
    <NodeRow $h={15.9}><Socket $c={color} />{name}:</NodeRow>
    <Fields $h={43.2}>
      {values.map((v, i) => <Field key={i}><span>{'XYZ'[i]}</span><span>{v}</span></Field>)}
    </Fields>
  </>
);

const link = (x1: number, y1: number, x2: number, y2: number, k: number) =>
  `M${x1} ${y1}C${x1 + k} ${y1} ${x2 - k} ${y2} ${x2} ${y2}`;

const FieldRow = styled.div`
  position: relative;
  padding: 1px 0;
`;

const Graph = ({ merged }: { merged: boolean }) => (
  <>
    <Links width="873.7" height="428" viewBox="75.6 573 873.7 428" fill="none" stroke="#02a884" strokeWidth="1.7">
      <path d={link(216.7, 662.7, 468.7, 663, 40)} strokeWidth="2" />
      <path d={link(216.7, 662.7, 300.7, 775.7, 32)} />
      <path d={link(402.7, 739.7, 468.7, 663, 25)} />
      {merged ? (
        <g stroke="#a58a82">
          <path d={link(570.3, 663, 626.2, 673, 12)} />
          <path d={link(730, 636.7, 788.3, 663.3, 24)} />
        </g>
      ) : <path d={link(570.3, 663, 788.3, 663.5, 40)} strokeWidth="2" />}
    </Links>
    <NodeBox $x={39.4} $y={64} $w={101.7} $h={52.3}>
      <NodeHead $bg={SLATE}><Chev s={8} />组输入</NodeHead>
      <NodeRow $out $mt={2.7}><Socket $c={GREEN} $out />几何数据</NodeRow>
      <NodeRow $out><Socket $c="#333" $out $hollow /></NodeRow>
    </NodeBox>
    <Pill $x={393} $y={79} $w={101.7} $h={22.3}>
      <Socket $c={GREEN} /><ChevRight s={6} />合并几何<i>||</i><Socket $c={GREEN} $out />
    </Pill>
    <NodeBox $x={225} $y={141.3} $w={102} $h={251.4}>
      <NodeHead $bg={TEAL}><Chev s={8} />变换几何体</NodeHead>
      <NodeRow $out $mt={2.4}><Socket $c={GREEN} $out />几何数据</NodeRow>
      <NodeSelect $mt={5.6}>各分量<Chev s={6} /></NodeSelect>
      <NodeRow><Socket $c={GREEN} />几何数据</NodeRow>
      <Vector name="移动" color="#6363c7" values={['-2 m', '0 m', '2 m']} />
      <Vector name="旋转" color="#a663c7" values={['0°', '0°', '0°']} />
      <Vector name="缩放" color="#6363c7" values={['1.000', '1.000', '1.000']} />
    </NodeBox>
    {merged && (
      <NodeBox $x={550.6} $y={37.7} $w={103.8} $h={106.5} $sel>
        <NodeHead $bg={TEAL}><Chev s={8} />按距离合并</NodeHead>
        <NodeRow $out $mt={3}><Socket $c={GREEN} $out />几何数据</NodeRow>
        <NodeSelect $mt={5.8}>全部<Chev s={6} /></NodeSelect>
        <NodeRow><Socket $c={GREEN} />几何数据</NodeRow>
        <NodeRow><Socket $c="#cca6d6" $diamond />选中项</NodeRow>
        <FieldRow>
          <Socket $c="#a1a1a1" />
          <Fields $h={14}><Field><span>距离</span><span>0.001 m</span></Field></Fields>
        </FieldRow>
      </NodeBox>
    )}
    <NodeBox $x={712.7} $y={65} $w={102} $h={52}>
      <NodeHead $bg={SLATE}><Chev s={8} />组输出</NodeHead>
      <NodeRow $mt={2.3}><Socket $c={GREEN} />几何数据</NodeRow>
      <NodeRow><Socket $c="#333" $hollow /></NodeRow>
    </NodeBox>
  </>
);

const tabs: [string, number][] = [
  ['群组', 33.7], ['工具', 34], ['视图', 34], ['节点牧人', 54.7], ['节点组翻译', 65.5],
  ['中', 26.3], ['排列', 34], ['Hot Node', 58.3], ['流', 23.7], ['', 20],
];

const PanelBody = styled.div`
  display: flex;
  flex-direction: column;
`;

const NodeEditor = ({ merged, activeTab }: { merged: boolean; activeTab: number }) => (
  <NodeBody>
    <NodeTools>
      <ToolStack>
        <ToolGroup><Tool $on $more><ToolIcon n="box" /></Tool></ToolGroup>
        <ToolGroup><Tool $more><ToolIcon n="annotate" /></Tool></ToolGroup>
        <ToolGroup><Tool><ToolIcon n="cut" /></Tool></ToolGroup>
      </ToolStack>
    </NodeTools>
    <NodeCanvas>
      <Crumbs>
        <Icon n="object" s={15} /><Text $ml={8}>立方体.002</Text>
        <Text $ml={15}><ChevRight /></Text>
        <Text $ml={8}><Icon n="geometry" s={15} /></Text><Text $ml={7}>几何节点</Text>
        <Text $ml={15}><ChevRight /></Text>
        <Text $ml={8}><Icon n="nodetree" s={15} /></Text><Text $ml={7.5}>几何节点.006</Text>
      </Crumbs>
      <Graph merged={merged} />
      <ScrollV />
      <ScrollH />
    </NodeCanvas>
    <Sidebar>
      <ToolPanel>
        <Bar $h={24} $pl={8} $bg="#141d24">
          <Chev s={9} /><Text $ml={4.5} $s={11.3}>活动工具</Text>
          <Text $ml={150} $c="#4b545c" $s={6}>:::::</Text>
        </Bar>
        <PanelBody>
          <Bar $h={34} $pl={11}><ToolIcon n="box" /><Text $ml={5.5}>框选</Text></Bar>
          <Bar $h={23} $pl={8.5}><SelectModes /></Bar>
        </PanelBody>
      </ToolPanel>
      <Tabs>
        {tabs.map(([name, h], i) => <Tab key={i} $h={h} $on={i === activeTab}>{merged ? null : name}</Tab>)}
      </Tabs>
    </Sidebar>
  </NodeBody>
);

/* ---------- spreadsheet pane ---------- */

type Row = { icon: IconName; name: string; n?: number; child?: boolean; open?: boolean; on?: boolean };
const rows: Row[] = [
  { icon: 'mesh', name: '网格', open: true },
  { icon: 'vert', name: '顶点', n: 16, child: true, on: true },
  { icon: 'edge', name: '边', n: 24, child: true },
  { icon: 'face', name: '面', n: 12, child: true },
  { icon: 'corner', name: '面拐', n: 48, child: true },
  { icon: 'curve', name: '曲线', open: true },
  { icon: 'ctrl', name: '控制点', n: 0, child: true },
  { icon: 'spline', name: '样条线', n: 0, child: true },
  { icon: 'cloud', name: '点云', open: true },
  { icon: 'point', name: '点', n: 0, child: true },
  { icon: 'volume', name: '体积栅格', n: 0 },
  { icon: 'instance', name: '实例', n: 0 },
];

const SpreadsheetPane = () => (
  <Spreadsheet>
    <Bar $h={25} $pl={8} $bg="#182630">
      <Cell $w={28}><Icon n="sheet" s={16} /><Chev /></Cell>
      <Select $w={84} $ml={6.6}>已解算<Chev /></Select>
      <Cell $w={18} $ml={5.5}><Icon n="object" s={14} /></Cell>
    </Bar>
    <Tree>
      {rows.map(r => (
        <TreeRow key={r.name} $on={r.on} $child={r.child}>
          {!r.child && <Slot $w={12}>{r.open && <Chev s={9} />}</Slot>}
          <Slot $w={r.child ? 15 : 18}><Icon n={r.icon} s={15} /></Slot>
          <span>{r.name}</span>
          {r.n !== undefined && <b>{r.n}</b>}
        </TreeRow>
      ))}
    </Tree>
    <SheetFooter />
  </Spreadsheet>
);

const Gap = styled.div`
  height: 3px;
  flex: none;
`;

const Blender = ({ stats, merged }: { stats: StatList; merged: boolean }) => (
  <Screen
    $w={merged ? 1196 : 1349}
    $sx={merged ? 1.0057 : 1}
    $sy={merged ? 1.0042 : 1}
    $dx={merged ? -0.1 : 0}
    $dy={merged ? -2.7 : 0}
  >
    <MainColumn>
      <ViewportPane stats={stats} marks={!merged} />
      <Gap />
      <NodeHeader />
      <NodeEditor merged={merged} activeTab={merged ? 2 : 1} />
    </MainColumn>
    {!merged && <SpreadsheetPane />}
  </Screen>
);

export default function App() {
  return (
    <Board>
      <Global />
      <FileName $x={13.5}>Pasted image 20240816151138.png</FileName>
      <FileName $x={1375}>Pasted image 20240816151033.png</FileName>
      <ImageCard $x={14} $y={65} $w={1362} $h={942}>
        <Blender
          merged={false}
          stats={[['物体', '5'], ['顶点', '16'], ['边', '24'], ['面', '12'], ['三角形', '24']]}
        />
      </ImageCard>
      <ImageCard $x={1376} $y={65} $w={1199.5} $h={942}>
        <Blender
          merged
          stats={[['物体', '5'], ['顶点', '14', true], ['边', '23'], ['面', '12'], ['三角形', '24']]}
        />
      </ImageCard>
      <NoteCard $x={400.5} $y={1016} $w={750} $h={180} $pt={14}>
        款选的两个立方体的顶点<br />处于同一位置
      </NoteCard>
      <NoteCard $x={1601} $y={1007.5} $w={750} $h={257} $pt={17}>
        通过顶点技术，我们可以<br />看到由于相同位置的顶点<br />被合并所以少了两个顶点
      </NoteCard>
      <Handle />
    </Board>
  );
}
